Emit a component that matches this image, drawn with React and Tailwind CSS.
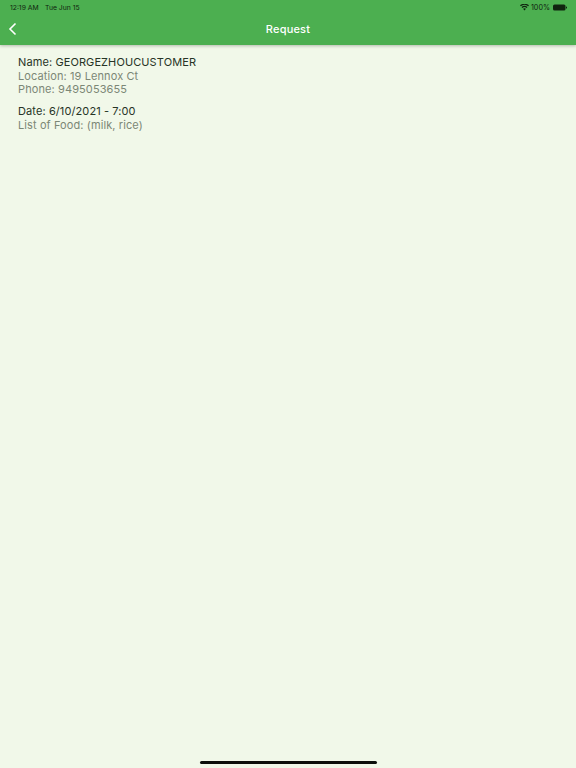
export default function App() {
  return (
    <div className="relative flex h-[768px] w-[576px] flex-col overflow-hidden bg-[#f1f8e9] font-['Inter','Liberation_Sans',sans-serif]">
      <header className="h-[45px] shrink-0 bg-[#4caf50] shadow-[0_1px_3px_rgba(0,0,0,0.25)]">
        <div className="flex h-[14px] items-center justify-between pl-[10px] pr-[9px] pt-[1px] text-[6.8px] leading-[13px] text-[#10240f]">
          <div className="flex gap-[6.5px]">
            <span>12:19 AM</span>
            <span>Tue Jun 15</span>
          </div>
          <div className="flex items-center gap-[2px]">
            <svg width="9" height="6.5" viewBox="0 0 10 7" fill="#10240f">
              <path d="M5 7 3.4 5.2a2.4 2.4 0 0 1 3.2 0L5 7ZM2.6 4.3l-.9-1a5 5 0 0 1 6.6 0l-.9 1a3.7 3.7 0 0 0-4.8 0ZM.9 2.4 0 1.4a7.6 7.6 0 0 1 10 0l-.9 1a6.3 6.3 0 0 0-8.2 0Z" />
            </svg>
            <span className="text-[7.2px]">100%</span>
            <svg width="14" height="7" viewBox="0 0 14 7" className="ml-[1px]">
              <rect x="0" y="0.5" width="12.5" height="6" rx="1.5" fill="#10240f" />
              <rect x="13" y="2.5" width="1" height="2" rx="0.5" fill="#10240f" />
            </svg>
          </div>
        </div>
        <div className="relative flex h-[31px] items-center justify-center">
          <svg width="9" height="14" viewBox="0 0 9 14" fill="none" stroke="#ffffff" strokeWidth="1.6" className="absolute left-[8px] top-[8px]">
            <path d="M7.5 1.5 2 7l5.5 5.5" />
          </svg>
          <h1 className="text-[11px] font-medium tracking-[0.2px] text-[#ffffff]">Request</h1>
        </div>
      </header>
      <main className="pl-[18px] pt-[11px] text-[11px] leading-[13.5px] tracking-[0.1px] text-[#7c8776]">
        <p className="text-[#273426]">Name: GEORGEZHOUCUSTOMER</p>
        <p>Location: 19 Lennox Ct</p>
        <p>Phone: 9495053655</p>
        <p className="mt-[8.5px] text-[#273426]">Date: 6/10/2021 - 7:00</p>
        <p>List of Food: (milk, rice)</p>
      </main>
      <div className="absolute bottom-[4px] left-[200px] h-[3px] w-[177px] rounded-full bg-[#0c0f0b]" />
    </div>
  );
}
